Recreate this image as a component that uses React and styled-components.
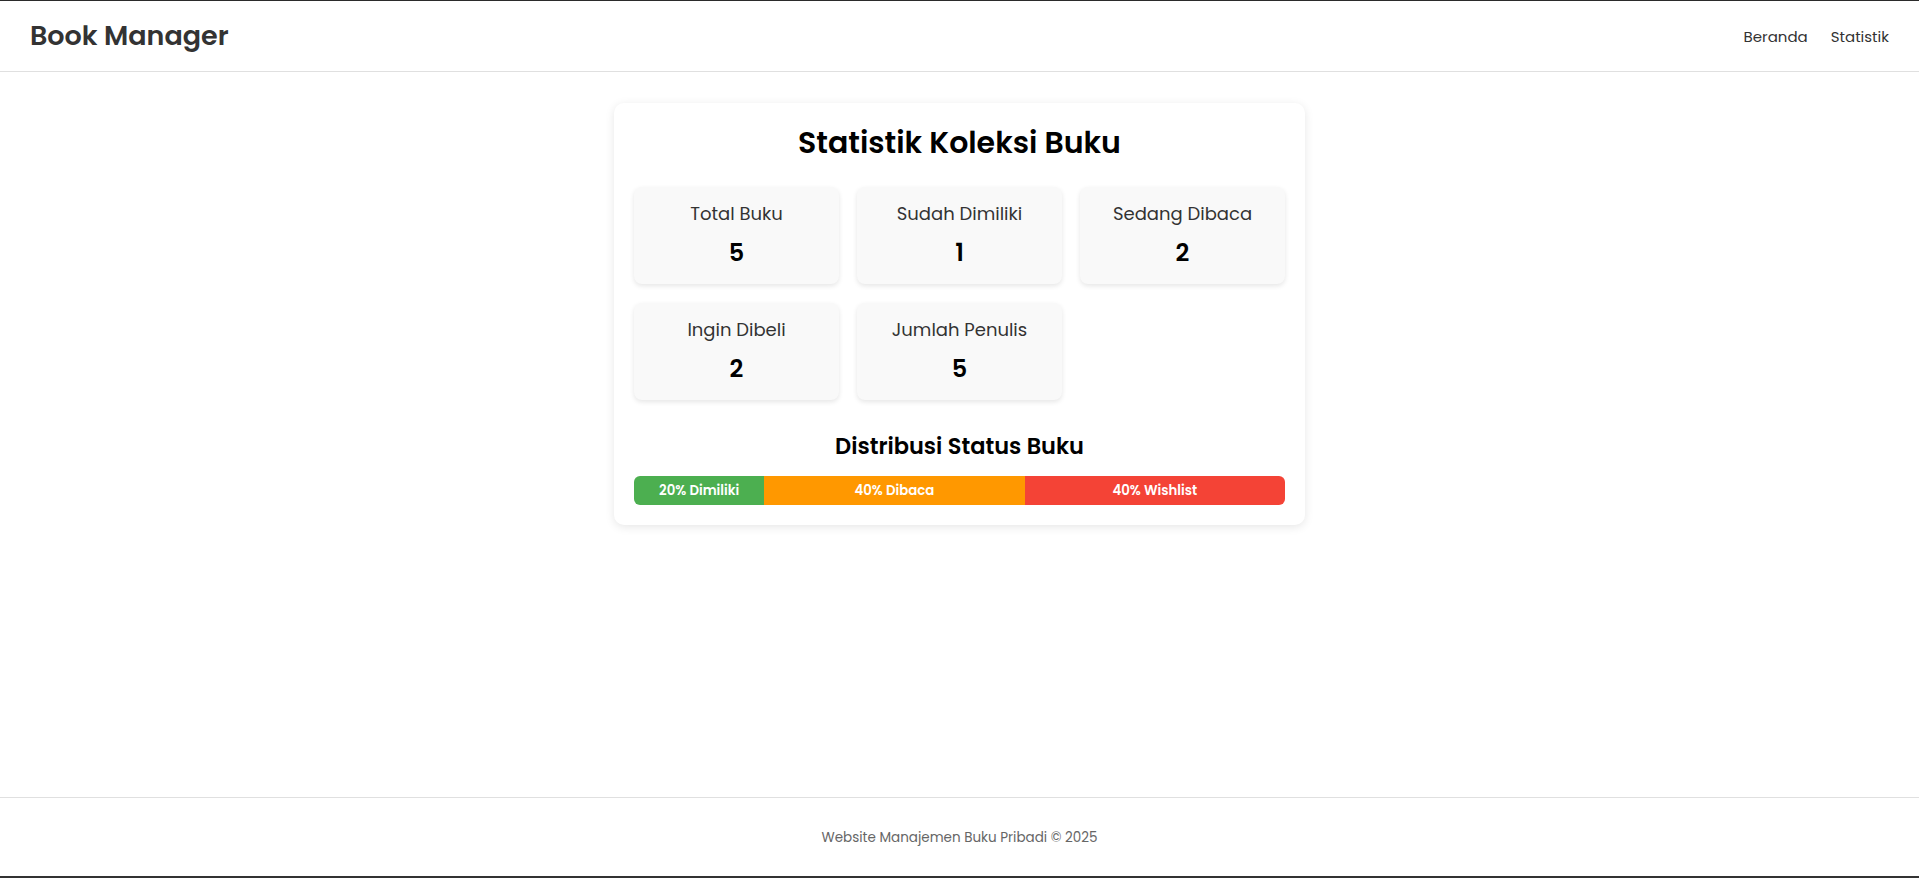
import styled, { createGlobalStyle } from "styled-components";

const GlobalStyle = createGlobalStyle`
    * {
        box-sizing: border-box;
    }
    body {
        margin: 0;
        font-family: "Poppins", "Inter", "Noto Sans", sans-serif;
        color: #333;
        background: #fff;
    }
`

const Page = styled.div`
    min-height: 100vh;
    display: flex;
    flex-direction: column;
    border-top: 1px solid #2b2b2b;
    border-bottom: 2px solid #333;
`

const Header = styled.header`
    height: 71px;
    padding: 0 30px;
    display: flex;
    align-items: center;
    justify-content: space-between;
    border-bottom: 1px solid #e0e0e0;
`

const Logo = styled.div`
    font-size: 27px;
    font-weight: 600;
    color: #333;
`

const Nav = styled.nav`
    display: flex;
    gap: 23px;
`

const NavLink = styled.a`
    font-size: 15px;
    font-weight: 400;
    color: #333;
    text-decoration: none;
    cursor: pointer;
`

const Main = styled.main`
    flex: 1;
    padding-top: 31px;
    display: flex;
    justify-content: center;
    align-items: flex-start;
`

const Card = styled.section`
    width: 691px;
    padding: 20px 20px 20px;
    background: #fff;
    border-radius: 10px;
    box-shadow: 0 2px 10px rgba(0, 0, 0, 0.1);
`

const Title = styled.h2`
    margin: 0 0 24px;
    font-size: 30px;
    line-height: 40px;
    font-weight: 600;
    text-align: center;
    color: #000;
`

const Grid = styled.div`
    display: grid;
    grid-template-columns: repeat(3, 1fr);
    gap: 19px 18px;
`

const StatBox = styled.div`
    height: 97px;
    padding-top: 15px;
    background: #f9f9f9;
    border-radius: 8px;
    box-shadow: 0 2px 5px rgba(0, 0, 0, 0.1);
    text-align: center;
`

const StatLabel = styled.h3`
    margin: 0 0 12px;
    font-size: 18px;
    line-height: 24px;
    font-weight: 400;
    color: #333;
`

const StatValue = styled.p`
    margin: 0;
    font-size: 24px;
    line-height: 30px;
    font-weight: 600;
    color: #000;
`

const SubTitle = styled.h3`
    margin: 31px 0 15px;
    font-size: 22.5px;
    line-height: 30px;
    font-weight: 600;
    text-align: center;
    color: #000;
`

const Bar = styled.div`
    display: flex;
    height: 29px;
    border-radius: 6px;
    overflow: hidden;
`

const Segment = styled.div`
    background: ${(p) => p.color};
    display: flex;
    align-items: center;
    justify-content: center;
    color: #fff;
    font-size: 13.3px;
    font-weight: 600;
`

const Footer = styled.footer`
    height: 79px;
    padding-top: 1px;
    display: flex;
    align-items: center;
    justify-content: center;
    border-top: 1px solid #e0e0e0;
    font-size: 13.5px;
    color: #666;
`

const stats = [
    { label: "Total Buku", value: 5 },
    { label: "Sudah Dimiliki", value: 1 },
    { label: "Sedang Dibaca", value: 2 },
    { label: "Ingin Dibeli", value: 2 },
    { label: "Jumlah Penulis", value: 5 },
];

const segments = [
    { pct: 20, text: "Dimiliki", color: "#4caf50" },
    { pct: 40, text: "Dibaca", color: "#ff9800" },
    { pct: 40, text: "Wishlist", color: "#f44336" },
];

function App() {
    return (
        <>
            <GlobalStyle />
            <Page>
                <Header>
                    <Logo>Book Manager</Logo>
                    <Nav>
                        <NavLink>Beranda</NavLink>
                        <NavLink>Statistik</NavLink>
                    </Nav>
                </Header>
                <Main>
                    <Card>
                        <Title>Statistik Koleksi Buku</Title>
                        <Grid>
                            {stats.map((s) => (
                                <StatBox key={s.label}>
                                    <StatLabel>{s.label}</StatLabel>
                                    <StatValue>{s.value}</StatValue>
                                </StatBox>
                            ))}
                        </Grid>
                        <SubTitle>Distribusi Status Buku</SubTitle>
                        <Bar>
                            {segments.map((s) => (
                                <Segment key={s.text} color={s.color} style={{ width: `${s.pct}%` }}>
                                    {s.pct}% {s.text}
                                </Segment>
                            ))}
                        </Bar>
                    </Card>
                </Main>
                <Footer>Website Manajemen Buku Pribadi © 2025</Footer>
            </Page>
        </>
    )
}

export default App;
